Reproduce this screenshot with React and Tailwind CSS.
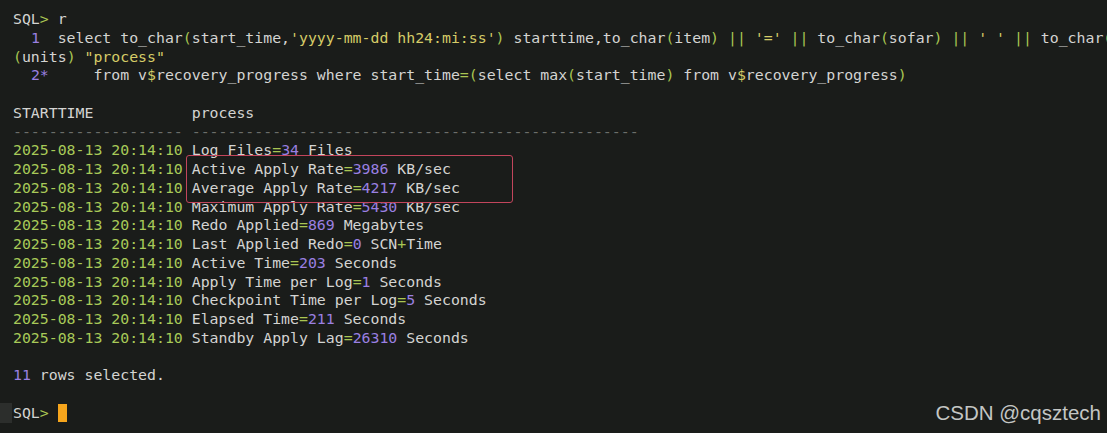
import React from "react";

const C = {
    t: "text-[#d4d4d2]",
    g: "text-[#a9c653]",
    y: "text-[#d6cc68]",
    p: "text-[#9b80e2]",
    d: "text-[#a8ca58]",
    m: "text-[#6c6e6a]",
};

const Seg = ({ parts }) =>
    parts.map(([text, c], i) => (
        <span key={i} className={C[c || "t"]}>
            {text}
        </span>
    ));

const QUERY = [
    [["  "], ["1", "p"], ["  select to_char"], ["(", "g"], ["start_time,"], ["'yyyy-mm-dd hh24:mi:ss'", "y"], [")", "g"], [" starttime,to_char"], ["(", "g"], ["item"], [")", "g"], [" "], ["||", "g"], [" "], ["'='", "y"], [" "], ["||", "g"], [" to_char"], ["(", "g"], ["sofar"], [")", "g"], [" "], ["||", "g"], [" "], ["' '", "y"], [" "], ["||", "g"], [" to_char"], ["(", "g"]],
    [["(", "g"], ["units"], [")", "g"], [" "], ['"process"', "y"]],
    [["  "], ["2*", "p"], ["     from v"], ["$", "y"], ["recovery_progress where start_time"], ["=", "g"], ["(", "g"], ["select max"], ["(", "g"], ["start_time"], [")", "g"], [" from v"], ["$", "y"], ["recovery_progress"], [")", "g"]],
];

const ROWS = [
    ["Log Files", "34", " Files"],
    ["Active Apply Rate", "3986", " KB/sec"],
    ["Average Apply Rate", "4217", " KB/sec"],
    ["Maximum Apply Rate", "5430", " KB/sec"],
    ["Redo Applied", "869", " Megabytes"],
    ["Last Applied Redo", "0", " SCN", "+", "Time"],
    ["Active Time", "203", " Seconds"],
    ["Apply Time per Log", "1", " Seconds"],
    ["Checkpoint Time per Log", "5", " Seconds"],
    ["Elapsed Time", "211", " Seconds"],
    ["Standby Apply Lag", "26310", " Seconds"],
];

const Line = ({ children }) => <div className="h-[18.76px] pl-[13px]">{children}</div>;

export default function App() {
    return (
        <div className="relative w-[1107px] h-[433px] overflow-hidden bg-[#1a1c1a] font-['DejaVu_Sans_Mono',monospace] text-[14.85px] leading-[18.76px] whitespace-pre">
            <div className="pt-[10px]">
                <Line>
                    <Seg parts={[["SQL"], [">", "g"], [" r"]]} />
                </Line>
                {QUERY.map((parts, i) => (
                    <Line key={i}>
                        <Seg parts={parts} />
                    </Line>
                ))}
                <Line> </Line>
                <Line>
                    <Seg parts={[["STARTTIME           process"]]} />
                </Line>
                <Line>
                    <Seg parts={[["-".repeat(19) + " " + "-".repeat(50), "m"]]} />
                </Line>
                {ROWS.map(([label, num, unit, plus, tail], i) => (
                    <Line key={i}>
                        <Seg parts={[["2025-08-13 20:14:10", "d"], [" " + label], ["=", "g"], [num, "p"], [unit]]} />
                        {plus && <Seg parts={[[plus, "g"], [tail]]} />}
                    </Line>
                ))}
                <Line> </Line>
                <Line>
                    <Seg parts={[["11", "p"], [" rows selected."]]} />
                </Line>
                <Line> </Line>
                <div className="h-[18.76px] flex items-center">
                    <div className="w-[12px] h-[20px] bg-[#2c2e2c] mr-[1px]" />
                    <Seg parts={[["SQL"], [">", "g"], [" "]]} />
                    <span className="inline-block w-[9px] h-[18px] bg-[#f6a51c]" />
                </div>
            </div>

            {/* highlight box */}
            <div className="absolute left-[186px] top-[155px] w-[327px] h-[48px] border-[1.5px] border-[#c2455c] rounded-[3px]" />

            <div className="absolute right-[6px] bottom-[10px] font-['Liberation_Sans',sans-serif] text-[20.5px] leading-none text-[#c4c6c4] whitespace-nowrap">
                CSDN @cqsztech
            </div>
        </div>
    );
}
